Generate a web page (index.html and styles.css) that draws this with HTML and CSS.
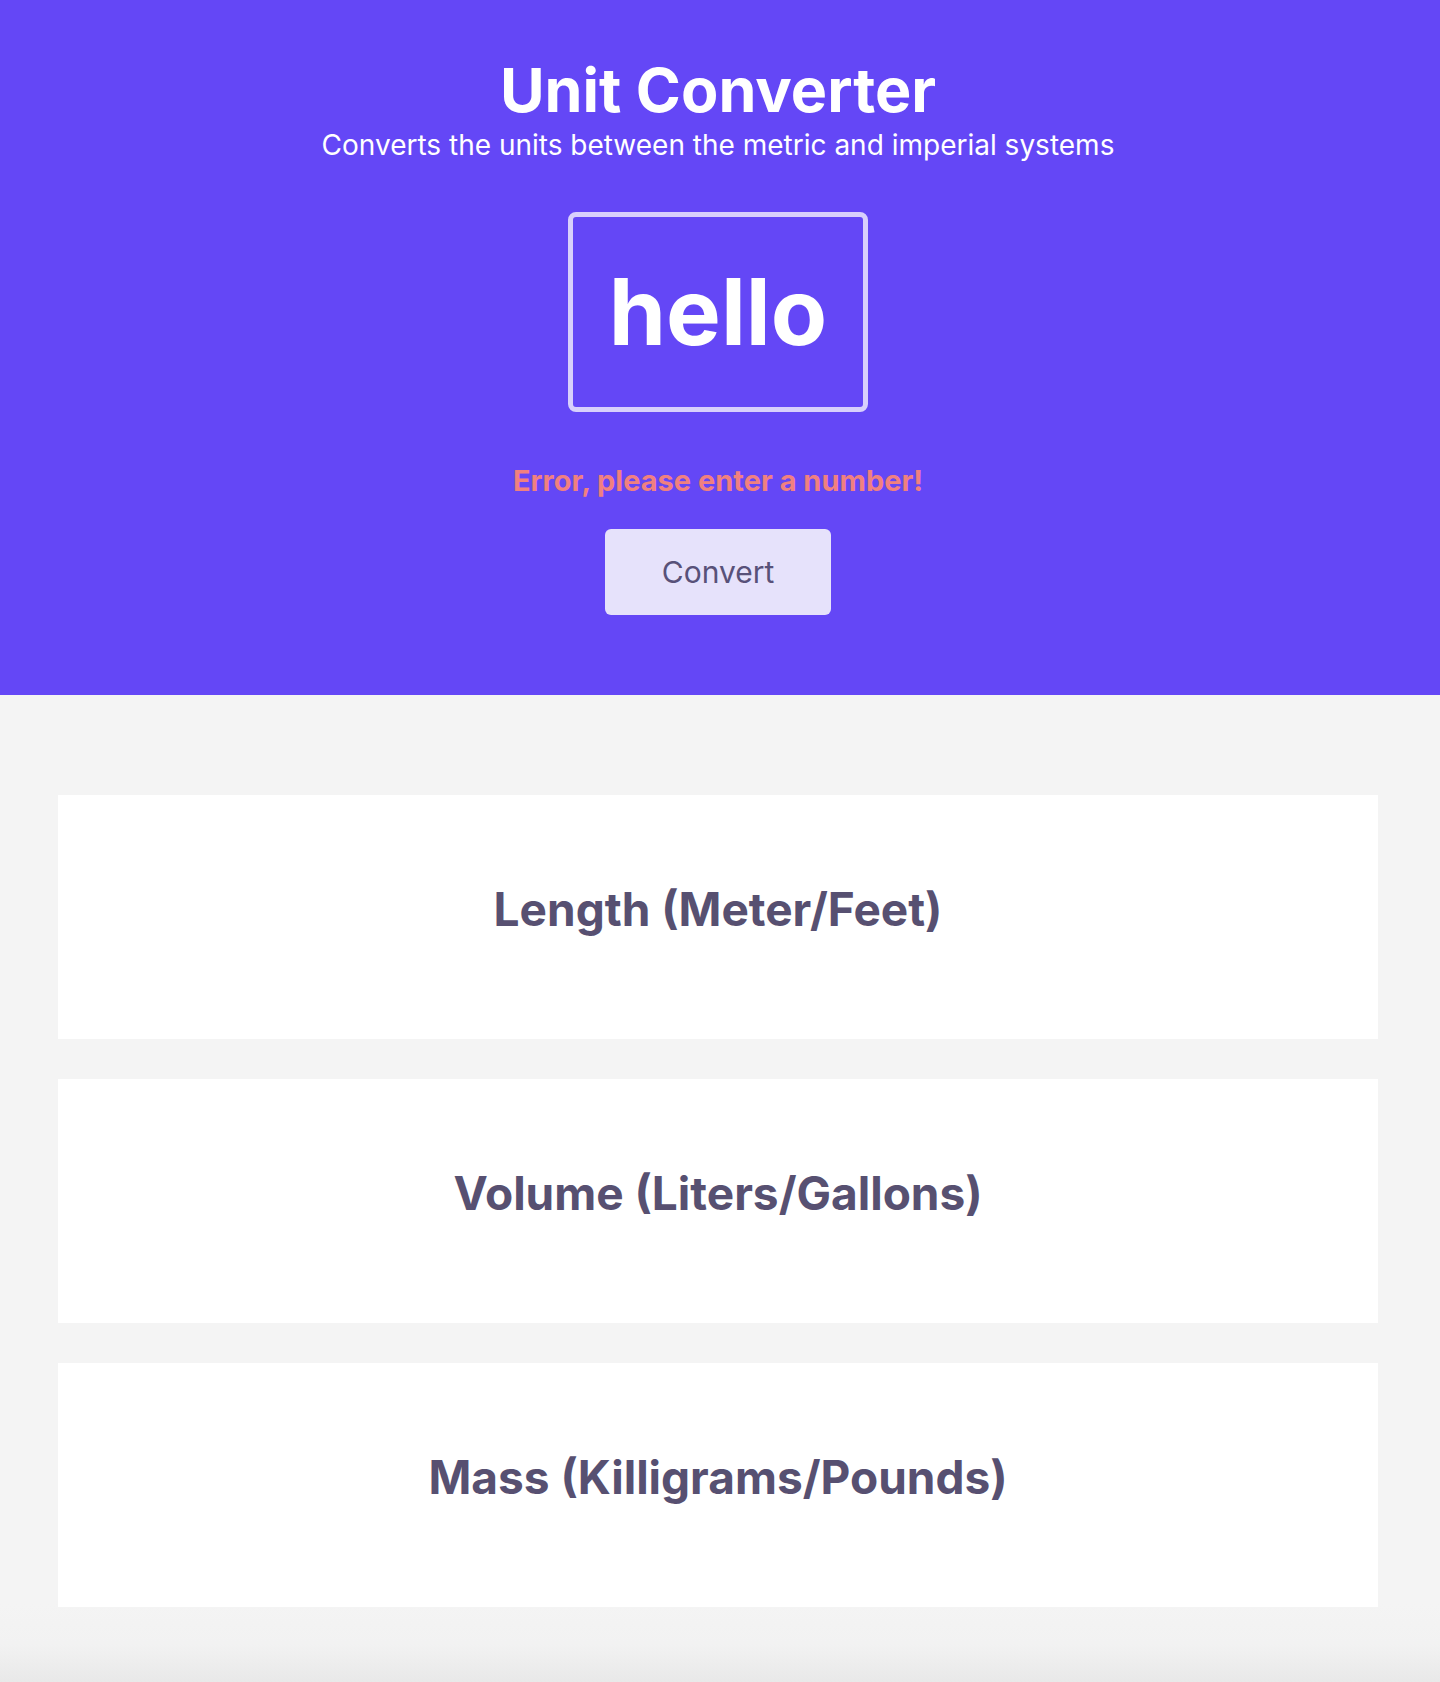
FILE: index.html
```html
<!DOCTYPE html>
<html lang="en">
<head>
<meta charset="utf-8">
<title>Unit Converter</title>
<link rel="stylesheet" href="styles.css">
</head>
<body>
<header class="hero">
  <h1 class="hero-title">Unit Converter</h1>
  <p class="hero-subtitle">Converts the units between the metric and imperial systems</p>
  <div class="input-box"><span class="input-value">hello</span></div>
  <p class="error">Error, please enter a number!</p>
  <button class="convert-btn" type="button">Convert</button>
</header>
<main class="results">
  <section class="card"><h2 class="card-title">Length (Meter/Feet)</h2><p class="card-result"></p></section>
  <section class="card"><h2 class="card-title">Volume (Liters/Gallons)</h2><p class="card-result"></p></section>
  <section class="card"><h2 class="card-title">Mass (Killigrams/Pounds)</h2><p class="card-result"></p></section>
</main>
</body>
</html>
```

FILE: styles.css
```css
* { box-sizing: border-box; }

html, body {
  margin: 0;
  padding: 0;
}

body {
  font-family: Inter, "Noto Sans", "Liberation Sans", sans-serif;
  background: #f4f4f4;
  min-height: 1682px;
  display: flex;
  flex-direction: column;
}

.hero {
  background: #6447f6;
  color: #ffffff;
  display: flex;
  flex-direction: column;
  align-items: center;
  padding: 58px 4px 80px 0;
}

.hero-title {
  margin: 0;
  font-size: 61px;
  line-height: 64px;
  font-weight: 700;
}

.hero-subtitle {
  margin: 7px 0 0;
  font-size: 28px;
  line-height: 32px;
  font-weight: 400;
}

.input-box {
  margin-top: 51px;
  width: 300px;
  height: 200px;
  border: 5px solid #d8d0fc;
  border-radius: 8px;
  display: flex;
  align-items: center;
  justify-content: center;
}

.input-value {
  font-size: 92px;
  font-weight: 700;
  line-height: 1;
  color: #ffffff;
}

.error {
  margin: 52px 0 0;
  font-size: 29px;
  line-height: 34px;
  font-weight: 700;
  color: #f08080;
}

.convert-btn {
  margin-top: 31px;
  width: 226px;
  height: 86px;
  border: none;
  border-radius: 6px;
  background: #e6e2fb;
  color: #585179;
  font-family: inherit;
  font-size: 30px;
  font-weight: 400;
}

.results {
  flex: 1;
  display: flex;
  flex-direction: column;
  gap: 40px;
  padding: 100px 62px 77px 58px;
  background: linear-gradient(to bottom, #f4f4f4 calc(100% - 80px), #f2f2f2 calc(100% - 40px), #e8e8e8 100%);
}

.card {
  height: 244px;
  background: #ffffff;
  display: flex;
  flex-direction: column;
  align-items: center;
  justify-content: center;
}

.card-title {
  margin: 0;
  font-size: 46px;
  font-weight: 700;
  color: #575071;
}

.card-result {
  margin: 0;
  height: 16px;
}
```
